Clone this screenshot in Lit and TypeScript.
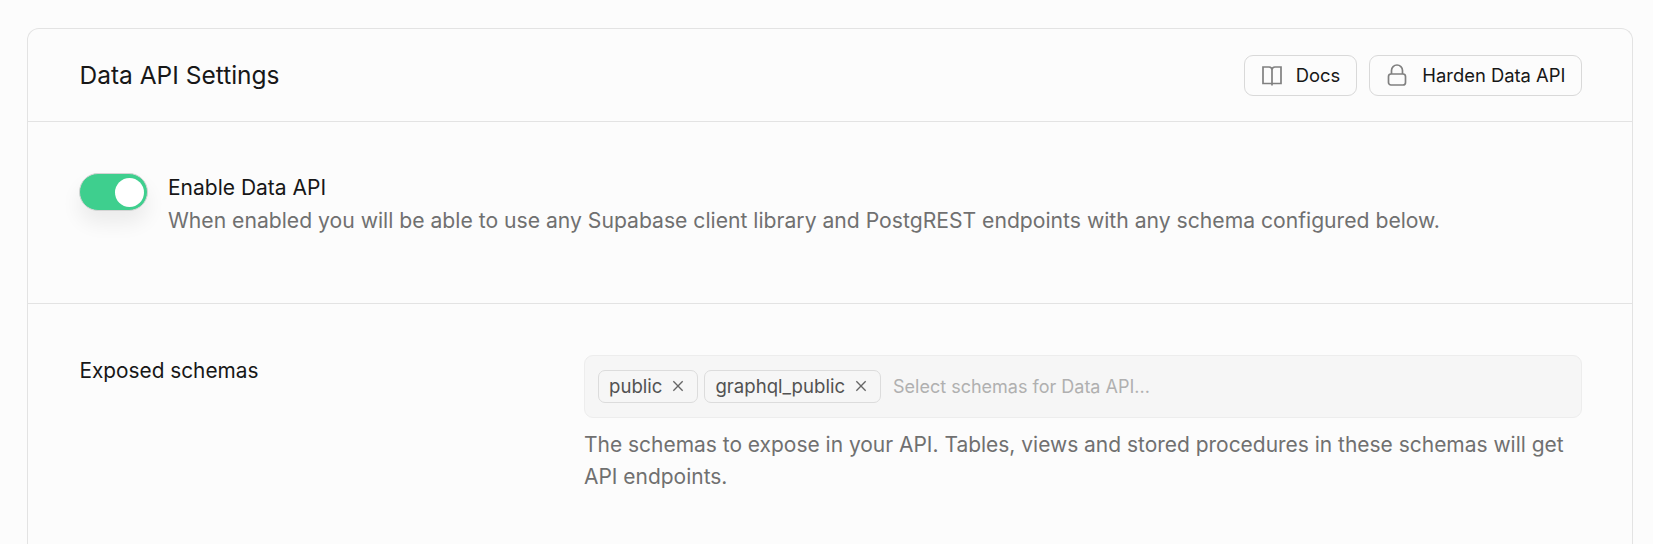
import { LitElement, html, css } from "lit";
import { customElement } from "lit/decorators.js";

@customElement("app-root")
export class AppRoot extends LitElement {
  static styles = css`
    :host { display: block; min-height: 544px; height: 544px; overflow: hidden; background: #fcfcfc; font-family: "Inter", "Noto Sans", sans-serif; color: #171717; box-sizing: border-box; padding: 28px 20px 0 27px; }
    .card { border: 1.5px solid #e3e3e3; border-bottom: none; border-radius: 12px 12px 0 0; background: #fcfcfc; height: 540px; box-sizing: border-box; }
    .header { height: 93px; box-sizing: border-box; display: flex; align-items: center; justify-content: space-between; padding: 0 50px 0 51.5px; border-bottom: 1.5px solid #e3e3e3; }
    .title { font-size: 24.5px; }
    .actions { display: flex; gap: 12px; }
    .btn { height: 41px; box-sizing: border-box; border: 1.5px solid #d9d9d9; border-radius: 9px; display: flex; align-items: center; gap: 11.5px; padding: 0 15.5px; font-size: 18.4px; background: #fcfcfc; }
    .btn.wide { gap: 13px; }
    .btn svg { width: 24px; height: 24px; color: #808080; flex: none; }
    .toggle-section { height: 182px; box-sizing: border-box; display: flex; gap: 20.5px; padding: 51px 51px 0 50.5px; border-bottom: 1.5px solid #e3e3e3; }
    .toggle { position: relative; width: 69px; height: 38px; border-radius: 19px; background: #3ecf8e; border: 1.5px solid #d4d4d4; box-sizing: border-box; box-shadow: 0 12px 20px rgba(0,0,0,.07); flex: none; }
    .knob { position: absolute; right: 3px; top: 3.5px; width: 29px; height: 29px; border-radius: 50%; background: #fff; }
    .label { font-size: 21px; line-height: 30px; }
    .schema .label { font-size: 20.8px; margin-top: 1px; }
    .desc { font-size: 21.15px; line-height: 32px; margin-top: 2px; color: #707070; }
    .schema { display: grid; grid-template-columns: 504.5px 1fr; padding: 51px 50px 0 51.5px; }
    .multi { height: 63px; box-sizing: border-box; border: 1.5px solid #ededed; border-radius: 9px; background: #f6f6f6; display: flex; align-items: center; gap: 6px; padding: 0 13px; }
    .tag { height: 33px; box-sizing: border-box; border: 1.5px solid #dcdcdc; border-radius: 7px; display: flex; align-items: center; gap: 8px; padding: 0 11px 1px 10px; font-size: 18.6px; color: #525252; }
    .tag svg { width: 16px; height: 16px; color: #666; }
    .ph { font-size: 18px; color: #b0b0b0; margin-left: 6px; padding-bottom: 1px; }
    .help { margin-top: 11px; font-size: 20.96px; line-height: 31.5px; color: #707070; }
  `;
  render() {
    return html`<div class="card">
      <div class="header">
        <div class="title">Data API Settings</div>
        <div class="actions">
          <div class="btn"><svg viewBox="0 0 24 24" fill="none" stroke="currentColor" stroke-width="1.7"><path d="M12 6.5V22.5M12 20.5H3V4H9a3 3 0 0 1 3 2.5a3 3 0 0 1 3-2.5H21V20.5H12"/></svg>Docs</div>
          <div class="btn wide"><svg viewBox="0 0 24 24" fill="none" stroke="currentColor" stroke-width="1.7"><rect x="3.5" y="11" width="17" height="11" rx="2.5"/><path d="M6.5 11V7.5a5.5 5.5 0 0 1 11 0V11"/></svg>Harden Data API</div>
        </div>
      </div>
      <div class="toggle-section">
        <div class="toggle"><div class="knob"></div></div>
        <div><div class="label">Enable Data API</div><div class="desc">When enabled you will be able to use any Supabase client library and PostgREST endpoints with any schema configured below.</div></div>
      </div>
      <div class="schema">
        <div class="label">Exposed schemas</div>
        <div>
          <div class="multi">
            <div class="tag">public <svg viewBox="0 0 24 24" fill="none" stroke="currentColor" stroke-width="2"><path d="M5 5l14 14M19 5L5 19"/></svg></div>
            <div class="tag">graphql_public <svg viewBox="0 0 24 24" fill="none" stroke="currentColor" stroke-width="2"><path d="M5 5l14 14M19 5L5 19"/></svg></div>
            <div class="ph">Select schemas for Data API...</div>
          </div>
          <div class="help">The schemas to expose in your API. Tables, views and stored procedures in these schemas will get API endpoints.</div>
        </div>
      </div>
    </div>`;
  }
}
